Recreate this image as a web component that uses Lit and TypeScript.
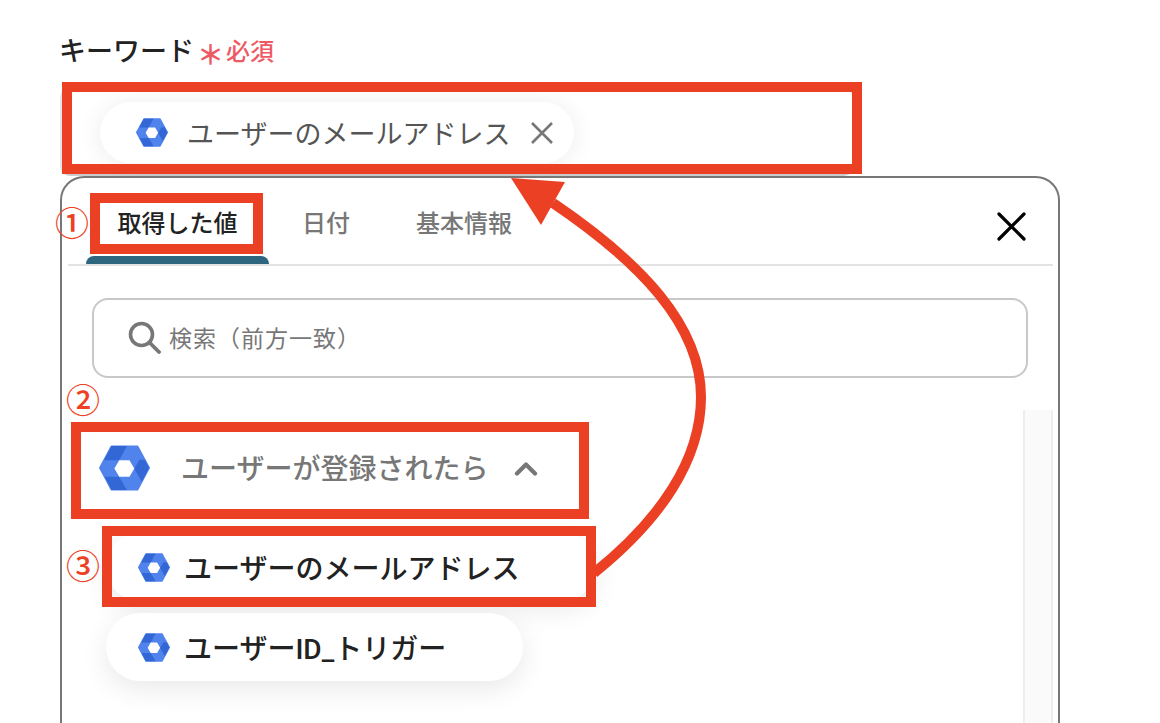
import { LitElement, html, css, svg } from "lit";
import { customElement } from "lit/decorators.js";

const hex = (cls: string) => html`<svg class=${cls} viewBox="-3 -3 159 141" aria-hidden="true">
  <polygon points="36,0 117,0 153,67 117,135 36,135 0,67" fill="#5083ec" stroke="#5083ec" stroke-width="6" stroke-linejoin="round"></polygon>
  <polygon points="36,-1 84,-1 60,43 13,43" fill="#3367d6"></polygon>
  <polygon points="107,70 123,42 140,42 153,67 130,110" fill="#3367d6"></polygon>
  <polygon points="15,95 60,95 84,136 36,136" fill="#3367d6"></polygon>
  <polygon points="45,69 60,43 92,43 107,69 92,95 60,95" fill="#fff"></polygon>
</svg>`;

@customElement("app-root")
export class AppRoot extends LitElement {
  static styles = css`
    :host {
      display: block;
      position: relative;
      width: 1160px;
      height: 723px;
      overflow: hidden;
      background: #fff;
      font-family: "Roboto", "Noto Sans CJK JP", "Noto Sans", sans-serif;
      color: #222;
    }
    .page { padding: 34px 0 0 60px; }
    .label-row { display: flex; align-items: center; height: 36px; }
    .label { font-size: 27px; font-weight: 500; line-height: 36px; color: #222; margin-left: -1px; }
    .ast { font-size: 27px; font-weight: 700; color: #ee5a64; margin: 8px 2px 0 3px; line-height: 30px; }
    .req { font-size: 24px; font-weight: 500; color: #ee5a64; line-height: 36px; margin-top: 0; }
    .input {
      box-sizing: border-box;
      margin-top: 17px;
      width: 794px;
      height: 89px;
      padding: 15px 0 0 40px;
      border: 2px solid #e4e4e4;
      border-bottom-color: #ccc;
      border-radius: 10px;
      background: #fff;
    }
    .sel-chip {
      box-sizing: border-box;
      display: flex;
      align-items: center;
      width: 474px;
      height: 61px;
      margin-top: -2px;
      margin-left: -2px;
      padding-left: 36px;
      border-radius: 31px;
      background: #fff;
      box-shadow: 0 2px 24px rgba(0, 0, 0, 0.08);
      font-size: 27px;
      color: #555;
    }
    .ic-sm { width: 32px; height: 29px; flex: none; }
    .sel-chip .ic-sm { margin-right: 19px; }
    .sel-x { width: 24px; height: 24px; margin-left: 20px; flex: none; }
    .panel {
      box-sizing: border-box;
      width: 1000px;
      height: 640px;
      border: 2px solid #777;
      border-bottom: none;
      border-radius: 24px 24px 0 0;
      background: #fff;
    }
    .tabs {
      display: flex;
      height: 86px;
      margin: 0 5px 0 6px;
      border-bottom: 2px solid #e3e3e3;
    }
    .tab {
      position: relative;
      display: flex;
      align-items: center;
      height: 86px;
      padding: 0 33px;
      box-sizing: border-box;
      font-size: 24px;
      font-weight: 500;
      color: #777;
    }
    .tab.first { margin-left: 18px; width: 183px; padding: 0; justify-content: center; color: #222; }
    .tab.first::after {
      content: "";
      position: absolute;
      left: 0;
      right: 0;
      bottom: 0;
      height: 8px;
      border-radius: 8px 8px 0 0;
      background: #2e6680;
    }
    .tab.third { padding-left: 33px; }
    .close { width: 29px; height: 29px; margin: 34px 27px 0 auto; flex: none; }
    .search {
      box-sizing: border-box;
      display: flex;
      align-items: center;
      gap: 8px;
      width: 936px;
      height: 80px;
      margin: 32px 0 0 30px;
      padding: 0 0 2px 34px;
      border: 2px solid #c8c8c8;
      border-radius: 16px;
      font-size: 23px;
      letter-spacing: 1px;
      color: #777;
    }
    .s-ic { width: 33px; height: 33px; flex: none; }
    .list { display: flex; margin-top: 32px; height: 320px; }
    .col { flex: 1; }
    .scroll {
      box-sizing: border-box;
      width: 30px;
      margin-right: 5px;
      background: #fafafa;
      border-left: 2px solid #eee;
      border-right: 2px solid #eee;
    }
    .group {
      display: flex;
      align-items: center;
      height: 46px;
      margin: 35px 0 0 37px;
      font-size: 28px;
      font-weight: 500;
      color: #777;
    }
    .group span { margin-top: -2px; margin-left: -2px; }
    .ic-lg { width: 51px; height: 46px; margin-right: 33px; flex: none; }
    .chev { width: 24px; height: 15px; margin-left: 26px; flex: none; }
    .chip {
      box-sizing: border-box;
      display: flex;
      align-items: center;
      gap: 14px;
      height: 68px;
      width: max-content;
      margin-left: 44px;
      padding: 0 77px 0 32px;
      border-radius: 34px;
      background: #fff;
      box-shadow: 0 8px 28px rgba(0, 0, 0, 0.09);
      font-size: 28px;
      font-weight: 500;
      color: #222;
    }
    .chip.one { margin-top: 42px; }
    .chip.two { margin-top: 12px; }
    .annot { position: absolute; box-sizing: border-box; border: 10px solid #eb4024; pointer-events: none; }
    .a1 { left: 62px; top: 82px; width: 800px; height: 92px; }
    .a2 { left: 90px; top: 193px; width: 173px; height: 61px; }
    .a3 { left: 71px; top: 422px; width: 518px; height: 97px; }
    .a4 { left: 102px; top: 526px; width: 494px; height: 81px; }
    .num { position: absolute; font-size: 34px; font-weight: 500; line-height: 40px; color: #ee4123; }
    .n1 { left: 55px; top: 204px; }
    .n2 { left: 66px; top: 381px; }
    .n3 { left: 66px; top: 547px; }
    .arrow { position: absolute; left: 0; top: 0; width: 1160px; height: 723px; pointer-events: none; }
  `;

  render() {
    return html`
      <div class="page">
        <div class="label-row">
          <span class="label">キーワード</span><span class="ast">＊</span><span class="req">必須</span>
        </div>
        <div class="input">
          <div class="sel-chip">
            ${hex("ic-sm")}
            <span>ユーザーのメールアドレス</span>
            <svg class="sel-x" viewBox="0 0 24 24"><path d="M2 2 22 22M22 2 2 22" stroke="#777" stroke-width="2.6" fill="none"></path></svg>
          </div>
        </div>
        <div class="panel">
          <div class="tabs">
            <div class="tab first">取得した値</div>
            <div class="tab">日付</div>
            <div class="tab third">基本情報</div>
            <svg class="close" viewBox="0 0 29 29"><path d="M2 2 27 27M27 2 2 27" stroke="#000" stroke-width="3.2" stroke-linecap="round" fill="none"></path></svg>
          </div>
          <div class="search">
            <svg class="s-ic" viewBox="0 0 33 33"><circle cx="13.5" cy="13.5" r="11" fill="none" stroke="#777" stroke-width="3.6"></circle><path d="M21.5 21.5 31 31" stroke="#777" stroke-width="3.8" stroke-linecap="round"></path></svg>
            <span>検索（前方一致）</span>
          </div>
          <div class="list">
            <div class="col">
              <div class="group">
                ${hex("ic-lg")}
                <span>ユーザーが登録されたら</span>
                <svg class="chev" viewBox="0 0 24 15"><path d="M3 12.5 12 3.5 21 12.5" fill="none" stroke="#777" stroke-width="4.2" stroke-linecap="round" stroke-linejoin="round"></path></svg>
              </div>
              <div class="chip one">${hex("ic-sm")}<span>ユーザーのメールアドレス</span></div>
              <div class="chip two">${hex("ic-sm")}<span>ユーザーID_トリガー</span></div>
            </div>
            <div class="scroll"></div>
          </div>
        </div>
      </div>
      <div class="annot a1"></div>
      <div class="annot a2"></div>
      <div class="annot a3"></div>
      <div class="annot a4"></div>
      <span class="num n1">①</span>
      <span class="num n2">②</span>
      <span class="num n3">③</span>
      <svg class="arrow" viewBox="0 0 1160 723">
        ${svg`<path d="M553 203C640 262 701 325 701 397C701 460 660 520 594 573" fill="none" stroke="#eb4024" stroke-width="10"></path>
        <polygon points="511,178 565,182 541,225" fill="#eb4024"></polygon>`}
      </svg>
    `;
  }
}
